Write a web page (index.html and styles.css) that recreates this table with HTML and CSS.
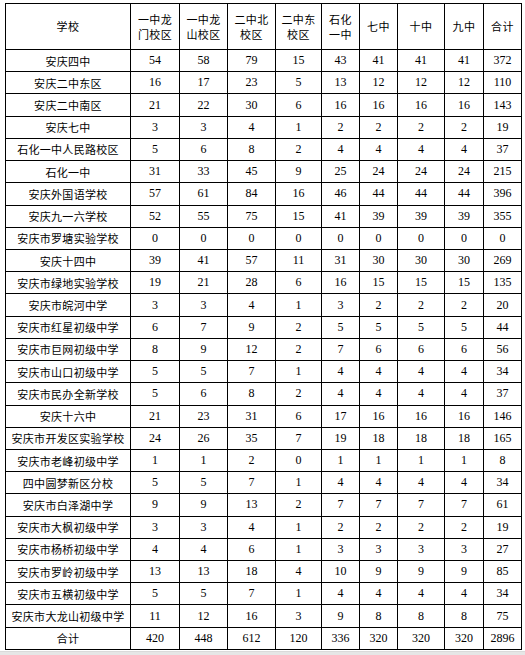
FILE: index.html
```html
<!DOCTYPE html>
<html lang="zh">
<head>
<meta charset="utf-8">
<link rel="stylesheet" href="styles.css">
</head>
<body>
<div class="page">
<table class="grid">
<colgroup>
<col class="c-name"><col class="c1"><col class="c2"><col class="c3"><col class="c4"><col class="c5"><col class="c6"><col class="c7"><col class="c8"><col class="c9">
</colgroup>
<thead>
<tr class="head">
<th>学校</th><th>一中龙<br>门校区</th><th>一中龙<br>山校区</th><th>二中北<br>校区</th><th>二中东<br>校区</th><th>石化<br>一中</th><th>七中</th><th>十中</th><th>九中</th><th>合计</th>
</tr>
</thead>
<tbody>
<tr><td class="name">安庆四中</td><td>54</td><td>58</td><td>79</td><td>15</td><td>43</td><td>41</td><td>41</td><td>41</td><td>372</td></tr>
<tr><td class="name">安庆二中东区</td><td>16</td><td>17</td><td>23</td><td>5</td><td>13</td><td>12</td><td>12</td><td>12</td><td>110</td></tr>
<tr><td class="name">安庆二中南区</td><td>21</td><td>22</td><td>30</td><td>6</td><td>16</td><td>16</td><td>16</td><td>16</td><td>143</td></tr>
<tr><td class="name">安庆七中</td><td>3</td><td>3</td><td>4</td><td>1</td><td>2</td><td>2</td><td>2</td><td>2</td><td>19</td></tr>
<tr><td class="name">石化一中人民路校区</td><td>5</td><td>6</td><td>8</td><td>2</td><td>4</td><td>4</td><td>4</td><td>4</td><td>37</td></tr>
<tr><td class="name">石化一中</td><td>31</td><td>33</td><td>45</td><td>9</td><td>25</td><td>24</td><td>24</td><td>24</td><td>215</td></tr>
<tr><td class="name">安庆外国语学校</td><td>57</td><td>61</td><td>84</td><td>16</td><td>46</td><td>44</td><td>44</td><td>44</td><td>396</td></tr>
<tr><td class="name">安庆九一六学校</td><td>52</td><td>55</td><td>75</td><td>15</td><td>41</td><td>39</td><td>39</td><td>39</td><td>355</td></tr>
<tr><td class="name">安庆市罗塘实验学校</td><td>0</td><td>0</td><td>0</td><td>0</td><td>0</td><td>0</td><td>0</td><td>0</td><td>0</td></tr>
<tr><td class="name">安庆十四中</td><td>39</td><td>41</td><td>57</td><td>11</td><td>31</td><td>30</td><td>30</td><td>30</td><td>269</td></tr>
<tr><td class="name">安庆市绿地实验学校</td><td>19</td><td>21</td><td>28</td><td>6</td><td>16</td><td>15</td><td>15</td><td>15</td><td>135</td></tr>
<tr><td class="name">安庆市皖河中学</td><td>3</td><td>3</td><td>4</td><td>1</td><td>3</td><td>2</td><td>2</td><td>2</td><td>20</td></tr>
<tr><td class="name">安庆市红星初级中学</td><td>6</td><td>7</td><td>9</td><td>2</td><td>5</td><td>5</td><td>5</td><td>5</td><td>44</td></tr>
<tr><td class="name">安庆市巨网初级中学</td><td>8</td><td>9</td><td>12</td><td>2</td><td>7</td><td>6</td><td>6</td><td>6</td><td>56</td></tr>
<tr><td class="name">安庆市山口初级中学</td><td>5</td><td>5</td><td>7</td><td>1</td><td>4</td><td>4</td><td>4</td><td>4</td><td>34</td></tr>
<tr><td class="name">安庆市民办全新学校</td><td>5</td><td>6</td><td>8</td><td>2</td><td>4</td><td>4</td><td>4</td><td>4</td><td>37</td></tr>
<tr><td class="name">安庆十六中</td><td>21</td><td>23</td><td>31</td><td>6</td><td>17</td><td>16</td><td>16</td><td>16</td><td>146</td></tr>
<tr><td class="name">安庆市开发区实验学校</td><td>24</td><td>26</td><td>35</td><td>7</td><td>19</td><td>18</td><td>18</td><td>18</td><td>165</td></tr>
<tr><td class="name">安庆市老峰初级中学</td><td>1</td><td>1</td><td>2</td><td>0</td><td>1</td><td>1</td><td>1</td><td>1</td><td>8</td></tr>
<tr><td class="name">四中圆梦新区分校</td><td>5</td><td>5</td><td>7</td><td>1</td><td>4</td><td>4</td><td>4</td><td>4</td><td>34</td></tr>
<tr><td class="name">安庆市白泽湖中学</td><td>9</td><td>9</td><td>13</td><td>2</td><td>7</td><td>7</td><td>7</td><td>7</td><td>61</td></tr>
<tr><td class="name">安庆市大枫初级中学</td><td>3</td><td>3</td><td>4</td><td>1</td><td>2</td><td>2</td><td>2</td><td>2</td><td>19</td></tr>
<tr><td class="name">安庆市杨桥初级中学</td><td>4</td><td>4</td><td>6</td><td>1</td><td>3</td><td>3</td><td>3</td><td>3</td><td>27</td></tr>
<tr><td class="name">安庆市罗岭初级中学</td><td>13</td><td>13</td><td>18</td><td>4</td><td>10</td><td>9</td><td>9</td><td>9</td><td>85</td></tr>
<tr><td class="name">安庆市五横初级中学</td><td>5</td><td>5</td><td>7</td><td>1</td><td>4</td><td>4</td><td>4</td><td>4</td><td>34</td></tr>
<tr><td class="name">安庆市大龙山初级中学</td><td>11</td><td>12</td><td>16</td><td>3</td><td>9</td><td>8</td><td>8</td><td>8</td><td>75</td></tr>
<tr><td class="name">合计</td><td>420</td><td>448</td><td>612</td><td>120</td><td>336</td><td>320</td><td>320</td><td>320</td><td>2896</td></tr>
</tbody>
</table>
</div>
<div class="footer-bar"></div>
</body>
</html>
```
FILE: styles.css
```css
html, body {
  margin: 0;
  padding: 0;
  background: #ffffff;
}
.page {
  padding: 3px 0 0 5px;
}
.grid {
  border-collapse: collapse;
  table-layout: fixed;
  width: 516px;
  border: 1px solid #000;
  font-family: "Liberation Serif", "Noto Sans CJK SC", serif;
  font-size: 12px;
  color: #000;
}
.c-name { width: 125px; }
.c1 { width: 49px; }
.c2 { width: 48px; }
.c3 { width: 48px; }
.c4 { width: 46px; }
.c5 { width: 38px; }
.c6 { width: 38px; }
.c7 { width: 47px; }
.c8 { width: 39px; }
.c9 { width: 38px; }
.grid th, .grid td {
  border: 1px solid #000;
  padding: 0;
  text-align: center;
  vertical-align: middle;
  white-space: nowrap;
  overflow: hidden;
}
.grid th {
  font-family: "Noto Sans CJK SC", sans-serif;
  font-weight: normal;
  font-size: 11px;
  line-height: 15px;
  letter-spacing: 0.4px;
}
.head {
  height: 46px;
}
.grid tbody tr {
  height: 22.22px;
}
.grid td.name {
  font-family: "Noto Sans CJK SC", sans-serif;
  font-size: 11px;
  letter-spacing: 0.3px;
}
.footer-bar {
  margin-top: 1px;
  height: 5px;
  background: #e6e6e6;
  border-top: 1px solid #dadada;
}
```
